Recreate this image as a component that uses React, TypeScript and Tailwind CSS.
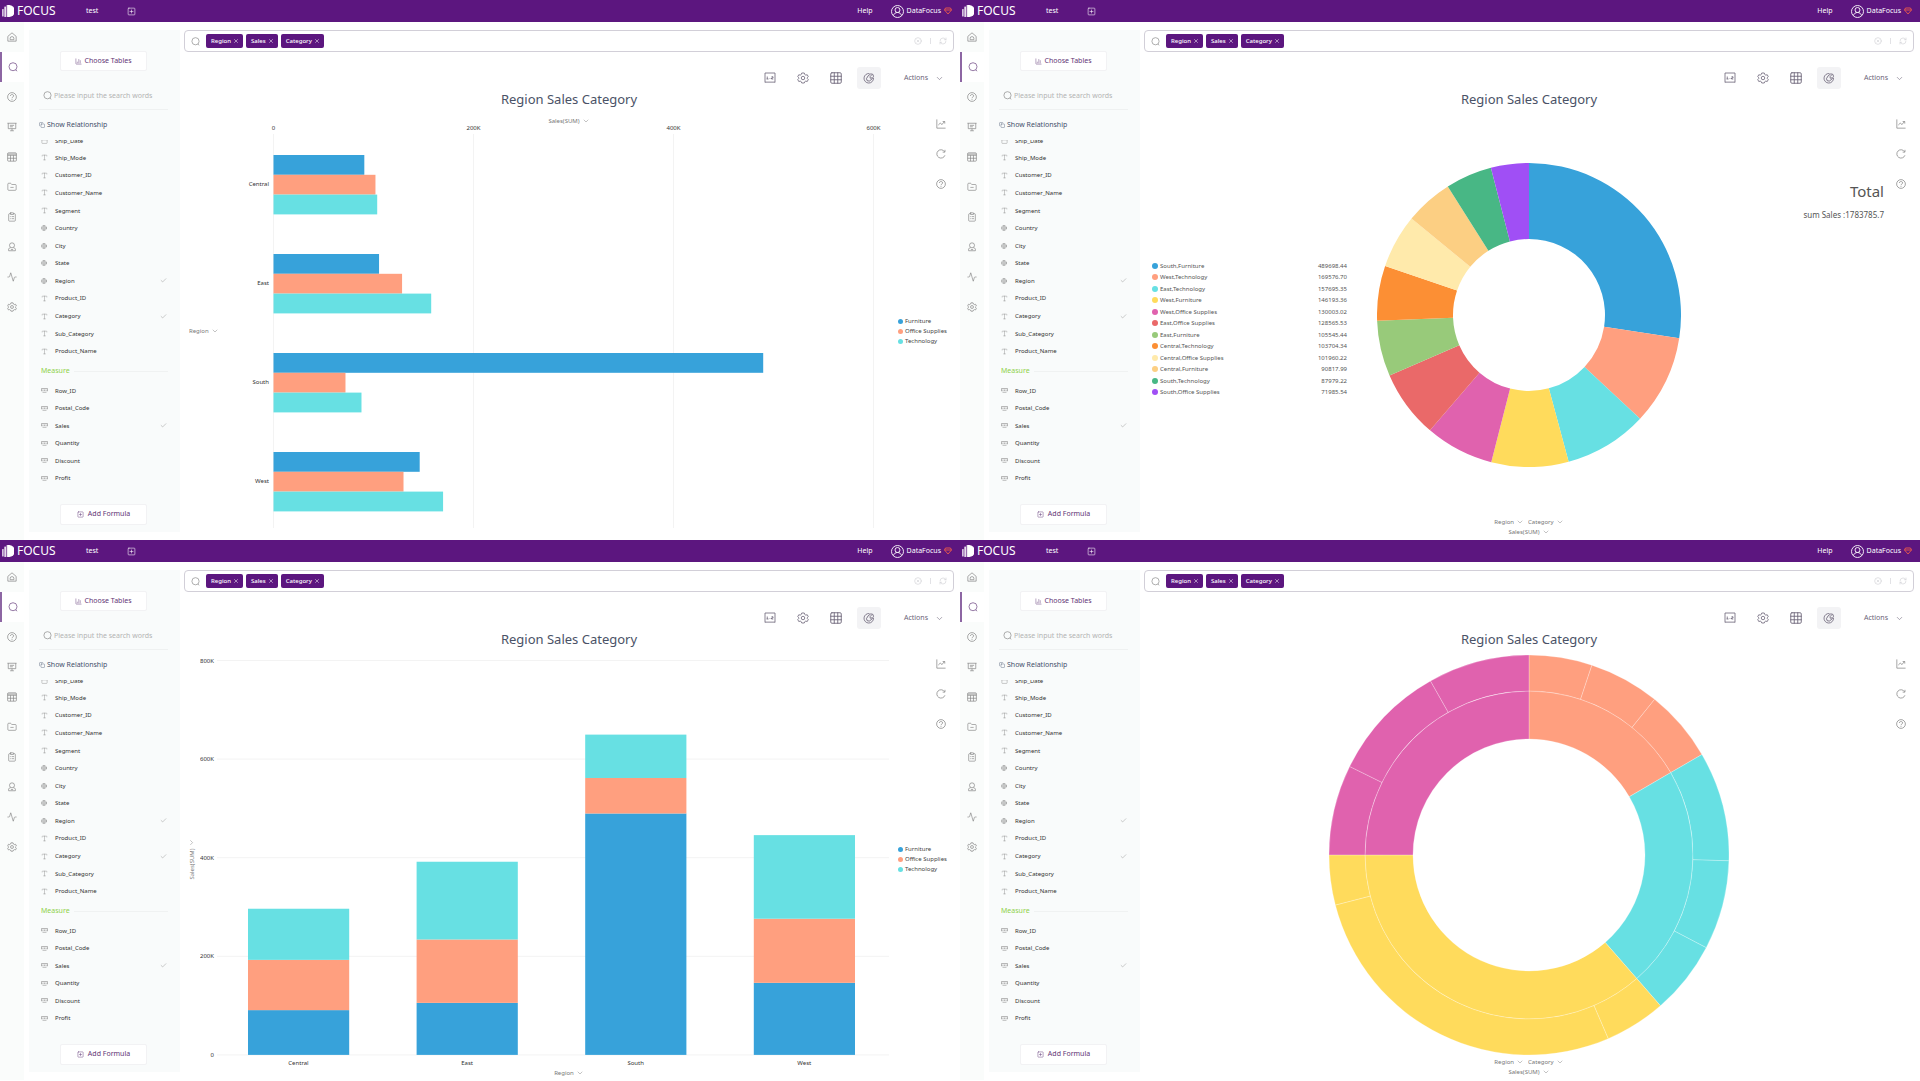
import React from 'react';
import {
  Activity,
  Calendar,
  ChartColumn,
  Check,
  ChevronDown,
  CircleX,
  ClipboardList,
  Copy,
  FolderMinus,
  Globe,
  Grid3x3,
  RefreshCw,
  SquarePlus,
  Type,
  X,
} from 'lucide-react';

type FieldKind = 'text' | 'geo';
type ChartKind = 'bar' | 'pie' | 'stacked' | 'sunburst';

interface Field {
  name: string;
  kind?: FieldKind;
  checked?: boolean;
}

const DIMENSIONS: Field[] = [
  { name: 'Ship_Mode', kind: 'text' },
  { name: 'Customer_ID', kind: 'text' },
  { name: 'Customer_Name', kind: 'text' },
  { name: 'Segment', kind: 'text' },
  { name: 'Country', kind: 'geo' },
  { name: 'City', kind: 'geo' },
  { name: 'State', kind: 'geo' },
  { name: 'Region', kind: 'geo', checked: true },
  { name: 'Product_ID', kind: 'text' },
  { name: 'Category', kind: 'text', checked: true },
  { name: 'Sub_Category', kind: 'text' },
  { name: 'Product_Name', kind: 'text' },
];

const MEASURES: Field[] = [
  { name: 'Row_ID' },
  { name: 'Postal_Code' },
  { name: 'Sales', checked: true },
  { name: 'Quantity' },
  { name: 'Discount' },
  { name: 'Profit' },
];

const CATEGORIES = [
  { name: 'Furniture', color: '#37a2da' },
  { name: 'Office Supplies', color: '#ff9f7f' },
  { name: 'Technology', color: '#67e0e3' },
];

// values follow the order of CATEGORIES
const REGIONS = [
  { name: 'Central', values: [90817.99, 101960.22, 103704.34] },
  { name: 'East', values: [105545.44, 128565.53, 157695.35] },
  { name: 'South', values: [489698.44, 71985.54, 87979.22] },
  { name: 'West', values: [146193.36, 130003.02, 169576.7] },
];

const SLICES = [
  { name: 'South,Furniture', value: '489698.44', color: '#37a2da' },
  { name: 'West,Technology', value: '169576.70', color: '#ff9f7f' },
  { name: 'East,Technology', value: '157695.35', color: '#67e0e3' },
  { name: 'West,Furniture', value: '146193.36', color: '#ffdb5c' },
  { name: 'West,Office Supplies', value: '130003.02', color: '#e062ae' },
  { name: 'East,Office Supplies', value: '128565.53', color: '#ea6969' },
  { name: 'East,Furniture', value: '105545.44', color: '#98ca7a' },
  { name: 'Central,Technology', value: '103704.34', color: '#fc8f34' },
  { name: 'Central,Office Supplies', value: '101960.22', color: '#ffeaab' },
  { name: 'Central,Furniture', value: '90817.99', color: '#fccf83' },
  { name: 'South,Technology', value: '87979.22', color: '#48b785' },
  { name: 'South,Office Supplies', value: '71985.54', color: '#a04ff5' },
];

const SUNBURST = [
  { name: 'Central', color: '#ff9f7f', values: [90817.99, 101960.22, 103704.34] },
  { name: 'East', color: '#67e0e3', values: [157695.35, 128565.53, 105545.44] },
  { name: 'South', color: '#ffdb5c', values: [87979.22, 489698.44, 71985.54] },
  { name: 'West', color: '#e062ae', values: [130003.02, 169576.7, 146193.36] },
];

const sum = (values: number[]) => values.reduce((a, b) => a + b, 0);

// ring segment between two fractions of a full turn, clockwise from the top
const ringPath = (c: number, inner: number, outer: number, from: number, to: number) => {
  const point = (r: number, f: number) =>
    `${(c + r * Math.sin(f * 2 * Math.PI)).toFixed(2)} ${(c - r * Math.cos(f * 2 * Math.PI)).toFixed(2)}`;
  const large = to - from > 0.5 ? 1 : 0;
  return `M${point(outer, from)}A${outer} ${outer} 0 ${large} 1 ${point(outer, to)}L${point(inner, to)}A${inner} ${inner} 0 ${large} 0 ${point(inner, from)}Z`;
};

interface IconProps {
  size: number;
  children: React.ReactNode;
}

const Icon = ({ size, children }: IconProps) => (
  <svg width={size} height={size} viewBox="0 0 24 24" fill="none" stroke="currentColor" strokeWidth="1.6">
    {children}
  </svg>
);

const SearchIcon = ({ size }: { size: number }) => (
  <svg width={size} height={size} viewBox="0 0 18 18" fill="none" stroke="currentColor" strokeWidth="1.6">
    <circle cx="9" cy="8.5" r="7.2" />
    <path d="M13.5 14l3 2.5" />
  </svg>
);

const LogoIcon = () => (
  <svg width="12" height="12" viewBox="0 0 24 24" fill="#fff">
    <rect x="0" y="8" width="3.4" height="15" rx="1" opacity="0.75" />
    <rect x="4.6" y="3" width="3.4" height="21" rx="1" opacity="0.85" />
    <rect x="9.2" y="0" width="3.4" height="24" rx="1" opacity="0.9" />
    <path d="M14 0a12 12 0 0 1 0 24z" />
    <path d="M12 0h3v24h-3z" />
  </svg>
);

const GemIcon = () => (
  <svg width="8" height="8" viewBox="0 0 16 16" fill="none" stroke="#ee5a4a" strokeWidth="1.8" strokeLinejoin="round">
    <path d="M3 2h10l2 4-7 8-7-8z" />
    <path d="M1 6h14" />
  </svg>
);

const NumberIcon = () => (
  <svg width="7" height="5" viewBox="0 0 14 10" fill="none" stroke="currentColor" strokeWidth="1.2">
    <path d="M1 1h12v5h-1.500M1 1v5h1.500M3 8.500h8" />
    <path d="M4 3v3M7 3v3M10 3v3" />
  </svg>
);

const HelpIcon = ({ size }: { size: number }) => (
  <Icon size={size}>
    <circle cx="12" cy="12" r="10.500" />
    <path d="M8 9.500C8 5 16.500 5 16 9.500c-.3 2.500-4 2.500-4 5.500M12 17v2" />
  </Icon>
);

const HomeIcon = () => (
  <Icon size={10}>
    <path d="M2 10.500L12 2l10 8.500V22H2z" strokeLinejoin="round" />
    <path d="M7.500 18.500v-3a4.500 4.500 0 0 1 9 0v3z" />
  </Icon>
);

const BoardIcon = () => (
  <Icon size={10}>
    <path d="M1 3h22M3 3v13h18V3M12 16v5M7.500 21h9" />
    <path d="M7 8h10M7 11.500h7" />
  </Icon>
);

const TableIcon = () => (
  <Icon size={10}>
    <rect x="1.500" y="2" width="21" height="20" rx="2" />
    <path d="M1.500 8h21M1.500 15h21M8.500 8v14M15.500 8v14M1.500 5h21" />
  </Icon>
);

const UserIcon = () => (
  <Icon size={10}>
    <circle cx="12" cy="8" r="6" />
    <path d="M8 13c-4 2-5 5-4 8h16c1-3 0-6-4-8M9 17l3 2 3-2" />
  </Icon>
);

const RatioIcon = () => (
  <Icon size={12}>
    <path d="M2 21V2h20v19" />
    <path d="M2 21l2-1.500 2 1.500 2-1.500 2 1.500 2-1.500 2 1.500 2-1.500 2 1.500 2-1.500 2 1.500" />
    <path d="M6.500 9v5M5 14h4M12 12.500v1.500M15 9.500h3V12h-3v2h3.500" />
  </Icon>
);

const GearIcon = ({ size }: { size: number }) => (
  <Icon size={size}>
    <path d="M9.500 2h5l1 3 2 1.200 3-.7 2 4-2 2v1.500l2 2-2 4-3-.8-2 1.200-1 2.600h-5l-1-2.600-2-1.200-3 .8-2-4 2-2v-1.500l-2-2 2-4 3 .7 2-1.200z" />
    <circle cx="12" cy="12" r="3.500" />
  </Icon>
);

// open ring with a tilted slice lifted towards the top right
const PieIcon = () => (
  <Icon size={12}>
    <path d="M13 3.200A9.500 9.500 0 1 0 21 12" />
    <ellipse cx="14" cy="11" rx="5" ry="8.500" transform="rotate(42 14 11)" />
    <path d="M17.500 5.500L14 9.500l.5 3 3.500-1" />
  </Icon>
);

const TrendIcon = () => (
  <Icon size={10}>
    <path d="M2 1v21h21" />
    <path d="M5.500 14.500l5-5 3.500 4 6-7M16 6h5v5" />
  </Icon>
);

const ReloadIcon = () => (
  <Icon size={10}>
    <path d="M20.500 6.500A10 10 0 1 0 21.500 15" />
    <path d="M21.500 2v5.500H16" />
  </Icon>
);

const RAIL = [
  { label: 'Home', icon: <HomeIcon /> },
  { label: 'Search', icon: <SearchIcon size={10} />, active: true },
  { label: 'Questions', icon: <HelpIcon size={10} /> },
  { label: 'Dashboards', icon: <BoardIcon /> },
  { label: 'Tables', icon: <TableIcon /> },
  { label: 'Resources', icon: <FolderMinus size={10} strokeWidth={1.5} /> },
  { label: 'Tasks', icon: <ClipboardList size={10} strokeWidth={1.5} /> },
  { label: 'Users', icon: <UserIcon /> },
  { label: 'Monitor', icon: <Activity size={10} strokeWidth={1.5} /> },
  { label: 'Settings', icon: <GearIcon size={10} /> },
];

const Header = () => (
  <header className="flex h-[22px] shrink-0 items-center bg-[#5c167f] pl-0.5 pr-2 text-[7px] text-white">
    <div className="flex w-21 items-center gap-[3px]">
      <LogoIcon />
      <span className="text-[12px] leading-none">FOCUS</span>
    </div>
    <a href="#test">test</a>
    <button aria-label="New tab" className="ml-[29px]">
      <SquarePlus size={9} strokeWidth={1.5} />
    </button>
    <div className="ml-auto flex items-center">
      <a href="#help">Help</a>
      <button className="ml-[18px] flex items-center gap-[3px]">
        <svg width="13" height="13" viewBox="0 0 26 26" fill="none" stroke="currentColor" strokeWidth="1.8">
          <circle cx="13" cy="13" r="12" />
          <circle cx="13" cy="10" r="5" />
          <path d="M5 21c1-4 4-6 8-6s7 2 8 6" />
        </svg>
        DataFocus
        <GemIcon />
      </button>
    </div>
  </header>
);

const Rail = () => (
  <nav className="flex w-6 shrink-0 flex-col bg-[#fafcfb]">
    {RAIL.map((item) => (
      <button
        key={item.label}
        aria-label={item.label}
        className={
          item.active
            ? 'flex h-[30px] items-center justify-center border-l-2 border-[#8d66a3] bg-white pr-px text-[#8b6b9c]'
            : 'flex h-[30px] items-center justify-center pr-px text-[#7f7f7f]'
        }
      >
        {item.icon}
      </button>
    ))}
  </nav>
);

const FieldRow = ({ field }: { field: Field }) => (
  <li className="flex items-center text-[6px] leading-[8px] text-[#333]">
    <span className="flex w-[14px] shrink-0 items-center text-[#8a8a8a]">
      {field.kind === 'text' && <Type size={7} strokeWidth={1.5} />}
      {field.kind === 'geo' && <Globe size={6} strokeWidth={2} />}
      {!field.kind && <NumberIcon />}
    </span>
    {field.name}
    {field.checked && <Check size={7} strokeWidth={1.5} className="ml-auto mr-px text-[#8a8a8a]" />}
  </li>
);

const FieldPanel = ({ id }: { id: string }) => (
  <aside className="my-2 ml-[5px] flex w-[151px] shrink-0 flex-col bg-[#f9fbfb] pb-[7px] pl-[10px] pr-3 pt-[21px]">
    <button className="flex h-5 w-[87px] items-center justify-center gap-0.5 self-center rounded-[2px] border border-[#f2f2f4] bg-white text-[7px] text-[#5f3475]">
      <ChartColumn size={7} strokeWidth={1.5} />
      Choose Tables
    </button>
    <div className="mt-[15px] flex h-6 shrink-0 items-center gap-0.5 border-b border-[#eff1f1] pb-1 pl-1 text-[#999]">
      <SearchIcon size={9} />
      <input
        id={id}
        aria-label="Search columns"
        placeholder="Please input the search words"
        className="min-w-0 flex-1 bg-transparent text-[7px] leading-[8px] outline-none placeholder:text-[#b3b3b3]"
      />
    </div>
    <button className="flex h-[30px] shrink-0 items-center gap-0.5 text-[7px] text-[#44506b]">
      <Copy size={6} strokeWidth={1.5} />
      Show Relationship
    </button>
    <div className="flex h-[9px] shrink-0 items-end overflow-hidden">
      <div className="flex h-[17px] items-center pl-0.5 text-[6px] leading-[8px] text-[#333]">
        <Calendar size={7} strokeWidth={1.5} className="mr-[7px] text-[#8a8a8a]" />
        Ship_Date
      </div>
    </div>
    <ul className="grid h-[211px] shrink-0 auto-rows-fr pl-0.5">
      {DIMENSIONS.map((field) => (
        <FieldRow key={field.name} field={field} />
      ))}
    </ul>
    <div className="flex h-[22px] shrink-0 items-center gap-1 pl-0.5 text-[7px] text-[#8fd14a]">
      Measure
      <span className="h-px flex-1 bg-[#f0f2f2]" />
    </div>
    <ul className="grid h-[105px] shrink-0 auto-rows-fr pl-0.5">
      {MEASURES.map((field) => (
        <FieldRow key={field.name} field={field} />
      ))}
    </ul>
    <button className="mt-[17px] flex h-[21px] w-[87px] items-center justify-center gap-1 self-center rounded-[2px] border border-[#f2f2f4] bg-white text-[7px] text-[#5f3475]">
      <SquarePlus size={7} strokeWidth={1.5} />
      Add Formula
    </button>
  </aside>
);

const SearchBar = () => (
  <div className="mt-2 flex h-[22px] shrink-0 items-center rounded-[4px] border border-[#d2cfd8] px-1.5">
    <span className="text-[#9a9a9a]">
      <SearchIcon size={9} />
    </span>
    <div className="ml-[6px] flex gap-[3px]">
      {['Region', 'Sales', 'Category'].map((tag) => (
        <span
          key={tag}
          className="flex h-[14px] items-center gap-0.5 rounded-[2px] bg-[#5c167f] pl-[5px] pr-1 text-[6px] font-medium text-white"
        >
          {tag}
          <button aria-label={`Remove ${tag}`}>
            <X size={6} strokeWidth={2} />
          </button>
        </span>
      ))}
    </div>
    <input aria-label="Search query" className="min-w-0 flex-1 bg-transparent px-1 text-[6px] outline-none" />
    <div className="flex items-center text-[#d3d3d8]">
      <button aria-label="Clear query">
        <CircleX size={8} strokeWidth={2} />
      </button>
      <span className="mx-2 h-1.5 w-px bg-[#e2e2e6]" />
      <button aria-label="Reload">
        <RefreshCw size={8} strokeWidth={2} />
      </button>
    </div>
  </div>
);

const Toolbar = () => (
  <div className="mt-[15px] flex h-[22px] shrink-0 items-center justify-end gap-[9px] pr-[10px] text-[#6b6377]">
    <button aria-label="Value labels" className="flex h-[22px] w-6 items-center justify-center">
      <RatioIcon />
    </button>
    <button aria-label="Chart settings" className="flex h-[22px] w-6 items-center justify-center">
      <GearIcon size={12} />
    </button>
    <button aria-label="Table view" className="flex h-[22px] w-6 items-center justify-center">
      <Grid3x3 size={14} strokeWidth={1.5} />
    </button>
    <button aria-label="Chart view" className="flex h-[22px] w-6 items-center justify-center rounded-[3px] bg-[#f3f3f5]">
      <PieIcon />
    </button>
    <button className="ml-[14px] flex items-center gap-[7px] text-[7px]">
      Actions
      <ChevronDown size={9} strokeWidth={1.5} />
    </button>
  </div>
);

const AxisSelect = ({ value }: { value: string }) => (
  <label className="flex h-[10px] items-center gap-0.5 whitespace-nowrap text-[6px] leading-[10px] text-[#777]">
    <select aria-label={value} className="h-[10px] appearance-none bg-transparent p-0 leading-[10px] field-sizing-content">
      <option>{value}</option>
    </select>
    <ChevronDown size={8} strokeWidth={1.5} className="shrink-0 text-[#888]" />
  </label>
);

const ChartTools = () => (
  <div className="absolute right-2 top-[9px] flex flex-col gap-5 text-[#777]">
    <button aria-label="Change chart type">
      <TrendIcon />
    </button>
    <button aria-label="Refresh">
      <ReloadIcon />
    </button>
    <button aria-label="Chart help">
      <HelpIcon size={10} />
    </button>
  </div>
);

const CategoryLegend = () => (
  <ul className="flex w-15 shrink-0 flex-col justify-center pl-1">
    {CATEGORIES.map((c) => (
      <li key={c.name} className="flex items-center gap-0.5 whitespace-nowrap text-[6px] leading-[10px] text-[#444]">
        <span className="size-[5px] rounded-full" style={{ backgroundColor: c.color }} />
        {c.name}
      </li>
    ))}
  </ul>
);

const BarChart = () => (
  <div className="flex flex-col pt-1.5">
    <div className="flex justify-center">
      <AxisSelect value="Sales(SUM)" />
    </div>
    <div className="flex">
      <div className="flex w-15 shrink-0 items-center pl-[5px]">
        <AxisSelect value="Region" />
      </div>
      <div className="min-w-0 flex-1">
        <svg viewBox="0 0 650 410" className="block h-auto w-full overflow-visible">
          {['0', '200K', '400K', '600K'].map((tick, i) => (
            <g key={tick}>
              <line x1={29.5 + i * 200} x2={29.5 + i * 200} y1="8" y2="402" stroke="#f3f3f3" />
              <text x={29.5 + i * 200} y="4" textAnchor="middle" fontSize="6" fill="#333">
                {tick}
              </text>
            </g>
          ))}
          {REGIONS.map((region, i) => (
            <g key={region.name}>
              <text x="25" y={60 + i * 99} textAnchor="end" fontSize="6" fill="#333">
                {region.name}
              </text>
              {region.values.map((value, j) => (
                <rect
                  key={j}
                  x="29.5"
                  y={29 + i * 99 + j * 19.8}
                  width={value / 1000}
                  height="19.8"
                  fill={CATEGORIES[j].color}
                />
              ))}
            </g>
          ))}
        </svg>
      </div>
      <CategoryLegend />
    </div>
  </div>
);

const StackedChart = () => (
  <div className="flex flex-col">
    <div className="flex">
      <div className="flex w-4 shrink-0 items-center justify-center">
        <div className="-rotate-90">
          <AxisSelect value="Sales(SUM)" />
        </div>
      </div>
      <div className="min-w-0 flex-1">
        <svg viewBox="0 0 694 418" className="block h-auto w-full">
          {['800K', '600K', '400K', '200K', '0'].map((tick, i) => (
            <g key={tick}>
              <line x1="17" x2="689" y1={10.5 + i * 98.6} y2={10.5 + i * 98.6} stroke="#f3f3f3" />
              <text x="14" y={12.5 + i * 98.6} textAnchor="end" fontSize="6" fill="#333">
                {tick}
              </text>
            </g>
          ))}
          {REGIONS.map((region, i) => (
            <g key={region.name}>
              {region.values.map((value, j) => {
                const top = sum(region.values.slice(0, j + 1));
                return (
                  <rect
                    key={j}
                    x={48 + i * 168.6}
                    y={404.9 - top * 0.000493}
                    width="101.2"
                    height={value * 0.000493}
                    fill={CATEGORIES[j].color}
                  />
                );
              })}
              <text x={98.5 + i * 168.6} y="415" textAnchor="middle" fontSize="6" fill="#333">
                {region.name}
              </text>
            </g>
          ))}
        </svg>
      </div>
      <CategoryLegend />
    </div>
    <div className="flex justify-center">
      <AxisSelect value="Region" />
    </div>
  </div>
);

const RingAxes = () => (
  <div className="flex flex-col items-center">
    <div className="flex gap-1">
      <AxisSelect value="Region" />
      <AxisSelect value="Category" />
    </div>
    <AxisSelect value="Sales(SUM)" />
  </div>
);

const PieChart = () => {
  const total = sum(SLICES.map((s) => Number(s.value)));
  let at = 0;
  return (
    <div className="flex flex-col">
      <div className="grid grid-cols-[1fr_304px_1fr] pb-[50px] pt-[53px]">
        <div className="flex items-center pl-2 pt-7">
          <table className="h-[138px] w-[195px] text-[6px] leading-[8px] text-[#555]">
            <tbody>
              {SLICES.map((slice) => (
                <tr key={slice.name}>
                  <td className="p-0">
                    <span className="flex items-center gap-0.5">
                      <span className="size-[6px] rounded-full" style={{ backgroundColor: slice.color }} />
                      {slice.name}
                    </span>
                  </td>
                  <td className="p-0 text-right">{slice.value}</td>
                </tr>
              ))}
            </tbody>
          </table>
        </div>
        <svg viewBox="0 0 304 304" className="block w-full">
          {SLICES.map((slice) => {
            const from = at;
            at += Number(slice.value) / total;
            return <path key={slice.name} d={ringPath(152, 76, 152, from, at)} fill={slice.color} />;
          })}
        </svg>
        <div className="flex flex-col items-end pr-[30px] pt-[18px] text-[#555]">
          <p className="text-[15px] leading-5">Total</p>
          <p className="mt-2 text-[8px] leading-3">sum Sales :1783785.7</p>
        </div>
      </div>
      <RingAxes />
    </div>
  );
};

const SunburstChart = () => {
  const total = sum(SUNBURST.flatMap((s) => s.values));
  let at = 0;
  return (
    <div className="flex flex-col">
      <svg viewBox="0 0 400 400" className="mb-[2px] mt-[5px] block w-[400px] self-center">
        {SUNBURST.map((region) => {
          const start = at;
          const end = start + sum(region.values) / total;
          return (
            <g key={region.name} fill={region.color} stroke="#fff" strokeOpacity="0.25">
              <path d={ringPath(200, 116, 164, start, end)} />
              {region.values.map((value, i) => {
                const from = at;
                at += value / total;
                return <path key={i} d={ringPath(200, 164, 200, from, at)} />;
              })}
            </g>
          );
        })}
      </svg>
      <RingAxes />
    </div>
  );
};

const Workspace = ({ kind }: { kind: ChartKind }) => (
  <section className="flex min-w-0 flex-col">
    <Header />
    <div className="flex flex-1">
      <Rail />
      <FieldPanel id={`columns-${kind}`} />
      <main className="flex min-w-0 flex-1 flex-col pl-1 pr-1.5">
        <SearchBar />
        <Toolbar />
        <h1 className="h-[21px] shrink-0 text-center text-[13px] leading-[21px] text-[#4a5266]">
          Region Sales Category
        </h1>
        <div className="relative flex-1">
          {kind === 'bar' && <BarChart />}
          {kind === 'pie' && <PieChart />}
          {kind === 'stacked' && <StackedChart />}
          {kind === 'sunburst' && <SunburstChart />}
          <ChartTools />
        </div>
      </main>
    </div>
  </section>
);

export default function App() {
  return (
    <div className="grid grid-cols-2 bg-white font-['Noto_Sans',sans-serif]">
      <Workspace kind="bar" />
      <Workspace kind="pie" />
      <Workspace kind="stacked" />
      <Workspace kind="sunburst" />
    </div>
  );
}
